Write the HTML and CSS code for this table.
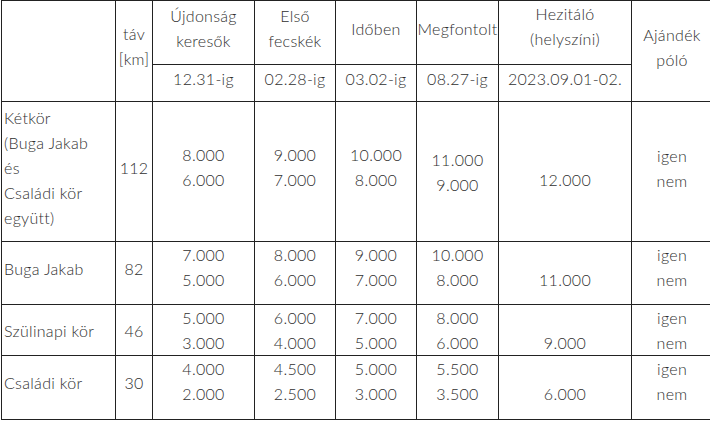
FILE: index.html
```html
<!DOCTYPE html>
<html lang="hu">
<head>
<meta charset="utf-8">
<title>Nevezési díjak</title>
<link rel="stylesheet" href="styles.css">
</head>
<body>
<table class="prices">
  <colgroup>
    <col class="c-name">
    <col class="c-dist">
    <col class="c-new">
    <col class="c-first">
    <col class="c-time">
    <col class="c-cons">
    <col class="c-hes">
    <col class="c-gift">
  </colgroup>
  <tr class="head-a">
    <td rowspan="2"></td>
    <td rowspan="2" class="lift-10">táv<br>[km]</td>
    <td class="lift-9">Újdonság<br>keresők</td>
    <td class="lift-9">Első<br>fecskék</td>
    <td class="lift-8">Időben</td>
    <td class="lift-8">Megfontolt</td>
    <td class="lift-13">Hezitáló<br>(helyszíni)</td>
    <td rowspan="2" class="lift-8">Ajándék<br>póló</td>
  </tr>
  <tr class="head-b">
    <td class="lift-9">12.31-ig</td>
    <td class="lift-9">02.28-ig</td>
    <td class="lift-9">03.02-ig</td>
    <td class="lift-9">08.27-ig</td>
    <td class="lift-9">2023.09.01-02.</td>
  </tr>
  <tr class="row-1">
    <td class="name top pad-3">Kétkör<br>(Buga Jakab<br>és<br>Családi kör<br>együtt)</td>
    <td class="lift-8">112</td>
    <td class="lift-10">8.000<br>6.000</td>
    <td class="lift-10">9.000<br>7.000</td>
    <td class="lift-10">10.000<br>8.000</td>
    <td>11.000<br>9.000</td>
    <td class="lift-10"><br>12.000</td>
    <td class="lift-7">igen<br>nem</td>
  </tr>
  <tr class="row-2">
    <td class="name lift-9">Buga Jakab</td>
    <td class="lift-9">82</td>
    <td class="top">7.000<br>5.000</td>
    <td class="top">8.000<br>6.000</td>
    <td class="top">9.000<br>7.000</td>
    <td class="top">10.000<br>8.000</td>
    <td class="top"><br>11.000</td>
    <td class="top">igen<br>nem</td>
  </tr>
  <tr class="row-3">
    <td class="name">Szülinapi kör</td>
    <td>46</td>
    <td class="top">5.000<br>3.000</td>
    <td class="top">6.000<br>4.000</td>
    <td class="top">7.000<br>5.000</td>
    <td class="top">8.000<br>6.000</td>
    <td class="top"><br>9.000</td>
    <td class="top">igen<br>nem</td>
  </tr>
  <tr class="row-4">
    <td class="name lift-10">Családi kör</td>
    <td class="lift-10">30</td>
    <td class="top">4.000<br>2.000</td>
    <td class="top">4.500<br>2.500</td>
    <td class="top">5.000<br>3.000</td>
    <td class="top">5.500<br>3.500</td>
    <td class="top"><br>6.000</td>
    <td class="top">igen<br>nem</td>
  </tr>
</table>
</body>
</html>
```

FILE: styles.css
```css
html, body {
  margin: 0;
  padding: 0;
  overflow: hidden;
  background: #ffffff;
}

.prices {
  margin: 0 0 0 1px;
  border-collapse: collapse;
  table-layout: fixed;
  width: 711px;
  font-family: Lato, "Open Sans", sans-serif;
  font-size: 16px;
  font-weight: 300;
  letter-spacing: 0.3px;
  color: #303030;
}

.c-name { width: 114px; }
.c-dist { width: 37px; }
.c-new { width: 102px; }
.c-first { width: 81px; }
.c-time { width: 81px; }
.c-cons { width: 82px; }
.c-hes { width: 133px; }
.c-gift { width: 81px; }

.prices td {
  border: 1px solid #222222;
  padding: 0;
  line-height: 25px;
  text-align: center;
  vertical-align: middle;
  white-space: nowrap;
}

.head-a { height: 64px; }
.head-b { height: 37px; }
.row-1 { height: 140px; }
.row-2 { height: 63px; }
.row-3 { height: 51px; }
.row-4 { height: 64px; }

.prices td.name {
  text-align: left;
  padding-left: 2px;
}

.prices td.top { vertical-align: top; }
.prices td.pad-3 { padding-top: 3px; }

.prices td.lift-7 { padding-bottom: 7px; }
.prices td.lift-8 { padding-bottom: 8px; }
.prices td.lift-9 { padding-bottom: 9px; }
.prices td.lift-10 { padding-bottom: 10px; }
.prices td.lift-13 { padding-bottom: 13px; }
```
